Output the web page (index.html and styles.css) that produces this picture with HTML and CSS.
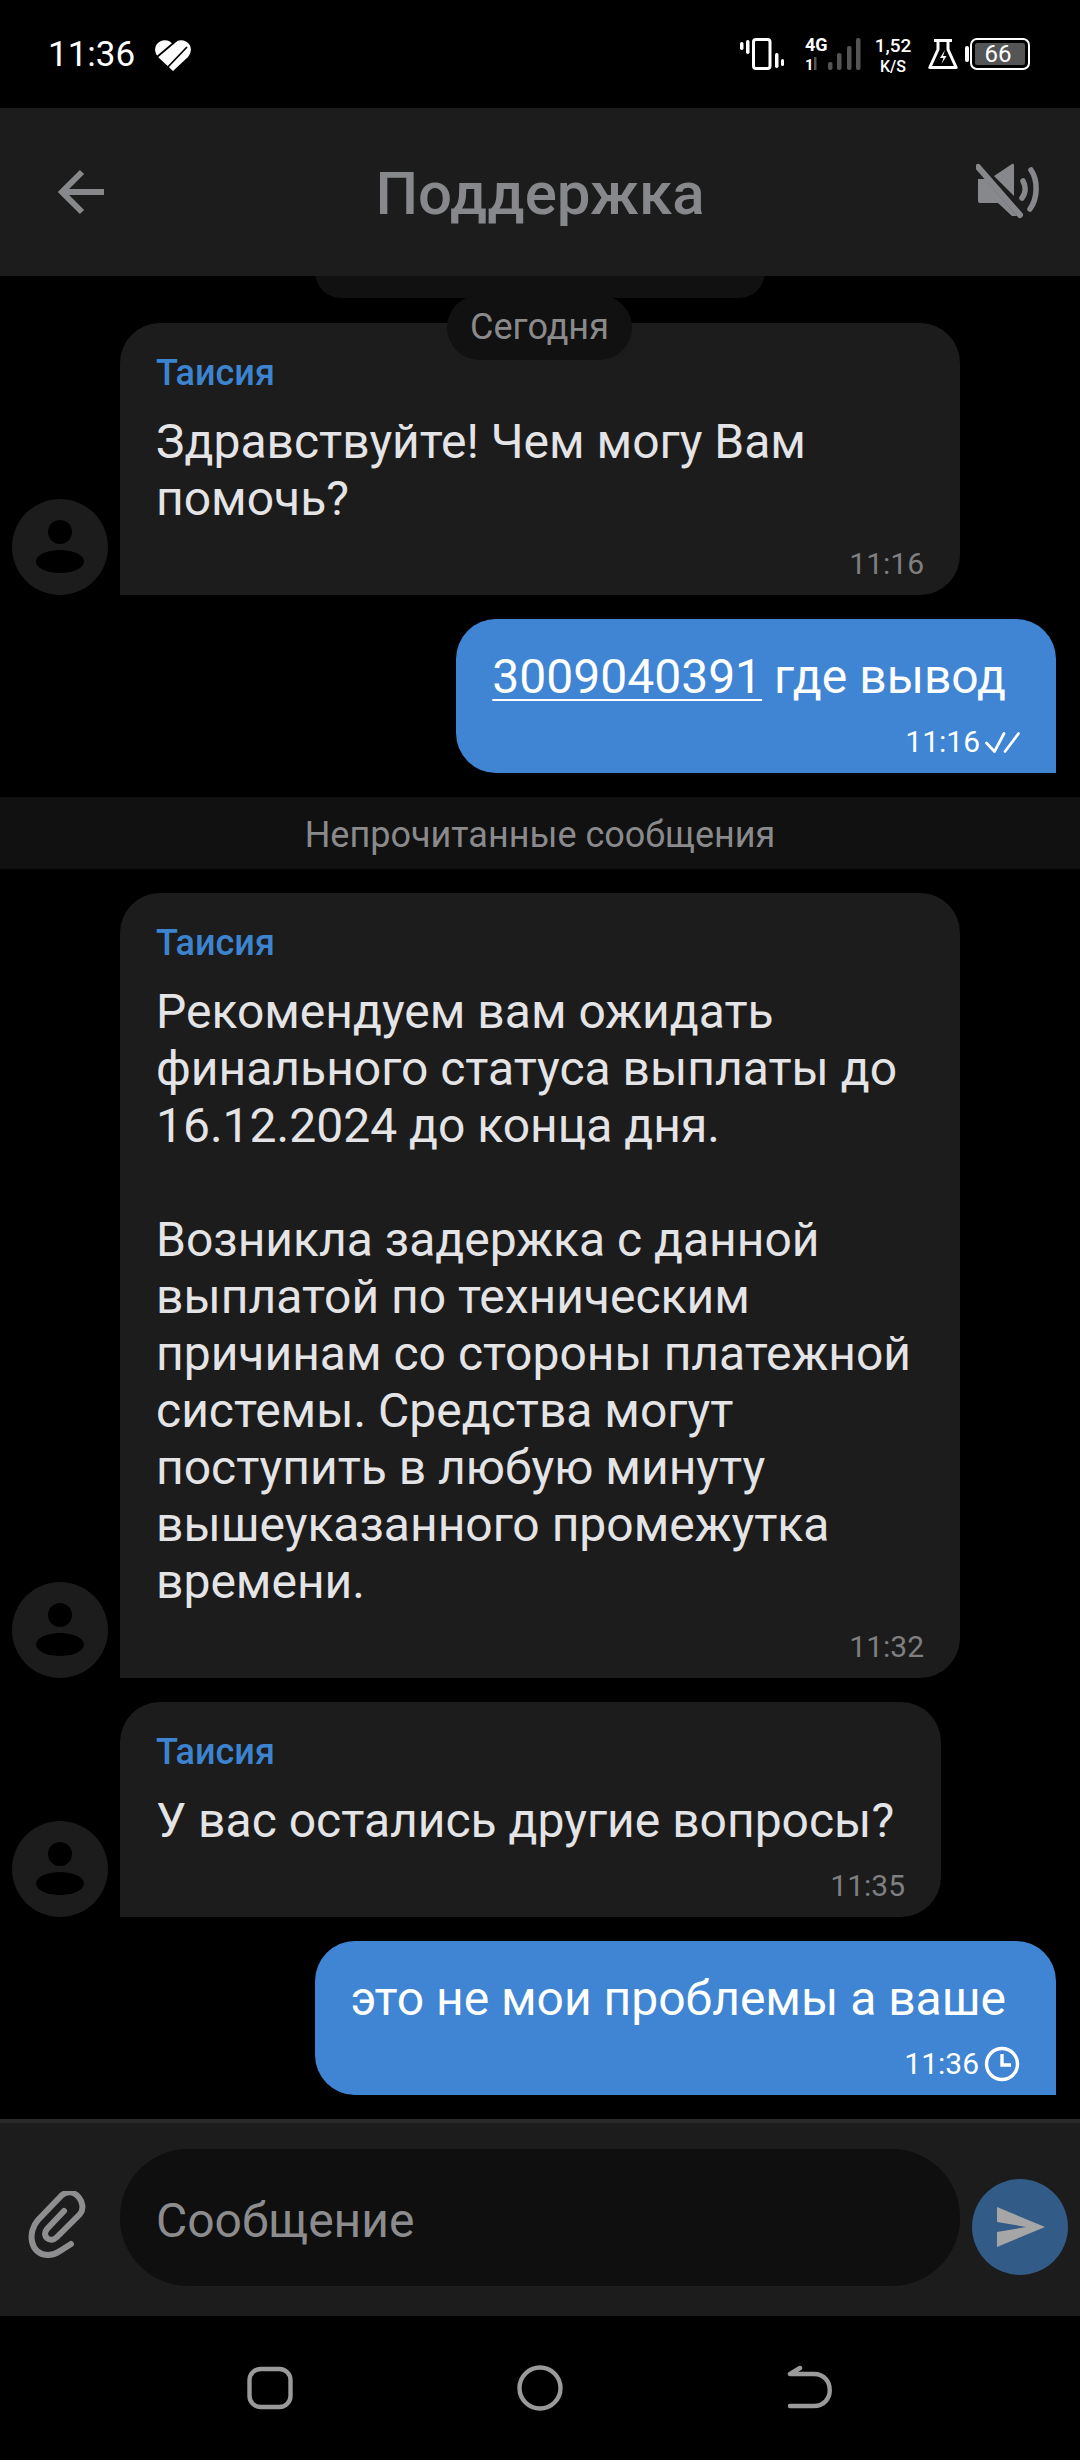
FILE: index.html
```html
<!DOCTYPE html>
<html lang="ru">
<head>
<meta charset="utf-8">
<title>Поддержка</title>
<link rel="stylesheet" href="styles.css">
</head>
<body>
<div class="screen">
  <div class="statusbar">
    <div class="status-left">
      <span class="clock">11:36</span>
      <svg class="heart" viewBox="0 0 36 31"><path fill="#fff" d="M18 31 3 17C-2 11 0 4 5 1.500c5-2.500 10-1 13 3 3-4 8-5.500 13-3 5 2.500 7 9.500 2 15.500z"/><path d="M2 17 22 0M11 29 32 7" stroke="#000" stroke-width="1.800" fill="none"/></svg>
    </div>
    <div class="status-right">
      <svg class="ic-vib" viewBox="0 0 44 32"><g fill="#fff"><rect x="0" y="4" width="3.500" height="8" rx="1.700"/><rect x="6" y="2" width="3.500" height="14" rx="1.700"/><rect x="35" y="15" width="3.500" height="15" rx="1.700"/><rect x="41" y="21" width="3" height="7" rx="1.500"/></g><rect x="13.500" y="1.500" width="16.500" height="29" rx="2.500" fill="none" stroke="#fff" stroke-width="3"/></svg>
      <div class="net">
        <div class="net-text"><span class="net-g">4G</span><span class="net-s">1</span></div>
        <svg class="ic-bars" viewBox="0 0 47 32"><g fill="#555"><rect x="0" y="19" width="2.500" height="13"/><rect x="14" y="24" width="4.500" height="8" rx="2"/><rect x="23" y="15" width="4.500" height="17" rx="2"/><rect x="33" y="8" width="4.500" height="24" rx="2"/><rect x="42" y="0" width="4.500" height="32" rx="2"/></g></svg>
      </div>
      <div class="speed"><span class="speed-v">1,52</span><span class="speed-u">K/S</span></div>
      <svg class="ic-flask" viewBox="0 0 30 30"><path d="M6 1.500h18M10 1.500v9L1.800 28.500h26.400L20 10.500v-9" fill="none" stroke="#fff" stroke-width="3" stroke-linejoin="round"/><path d="M17 11l-5 8h3.500l-2 6 5-8H15z" fill="#fff"/></svg>
      <div class="battery"><span class="cap"></span><div class="cell"><span class="fill"></span><span class="pct">66</span></div></div>
    </div>
  </div>

  <header class="appbar">
    <svg class="ic-back" viewBox="0 0 48 48"><path d="M46 24H6M24 4 4 24l20 20" fill="none" stroke="#87888b" stroke-width="6"/></svg>
    <h1 class="title">Поддержка</h1>
    <svg class="ic-mute" viewBox="0 0 64 56"><path fill="#87888b" d="M2 16h7l32 37-5 0-14-13H4a2 2 0 0 1-2-2zM18 13 36 1c1-.5 2 0 2 1.500V33z"/><path d="M2 4l42 48" stroke="#87888b" stroke-width="6" stroke-linecap="round"/><path d="M47 18c3 5 3 12-1 17M55 7c7 10 7 28-1 39" fill="none" stroke="#87888b" stroke-width="5.500" stroke-linecap="round"/></svg>
  </header>

  <main class="chat">
    <div class="ghost-pill"></div>
    <div class="date-pill">Сегодня</div>

    <div class="row">
      <svg class="avatar" viewBox="0 0 96 96"><circle cx="48" cy="48" r="48" fill="#1c1c1c"/><circle cx="48" cy="33" r="12" fill="#000"/><ellipse cx="48" cy="62.500" rx="24" ry="11.500" fill="#000"/></svg>
      <div class="bubble in wide">
        <div class="name">Таисия</div>
        <div class="text">Здравствуйте! Чем могу Вам<br>помочь?</div>
        <div class="meta">11:16</div>
      </div>
    </div>

    <div class="bubble out">
      <div class="text"><u>3009040391</u> где вывод</div>
      <div class="meta"><span>11:16</span>
        <svg class="ic-tick" viewBox="0 0 35 21"><path d="M1.500 11l8 8.500L19 1.500M20 19.500 33.500 1.500" fill="none" stroke="#fff" stroke-width="2.700" stroke-linecap="round" stroke-linejoin="round"/></svg>
      </div>
    </div>

    <div class="unread">Непрочитанные сообщения</div>

    <div class="row">
      <svg class="avatar" viewBox="0 0 96 96"><circle cx="48" cy="48" r="48" fill="#1c1c1c"/><circle cx="48" cy="33" r="12" fill="#000"/><ellipse cx="48" cy="62.500" rx="24" ry="11.500" fill="#000"/></svg>
      <div class="bubble in wide">
        <div class="name">Таисия</div>
        <div class="text">Рекомендуем вам ожидать<br>финального статуса выплаты до<br>16.12.2024 до конца дня.<br><br>Возникла задержка с данной<br>выплатой по техническим<br>причинам со стороны платежной<br>системы. Средства могут<br>поступить в любую минуту<br>вышеуказанного промежутка<br>времени.</div>
        <div class="meta">11:32</div>
      </div>
    </div>

    <div class="row">
      <svg class="avatar" viewBox="0 0 96 96"><circle cx="48" cy="48" r="48" fill="#1c1c1c"/><circle cx="48" cy="33" r="12" fill="#000"/><ellipse cx="48" cy="62.500" rx="24" ry="11.500" fill="#000"/></svg>
      <div class="bubble in">
        <div class="name">Таисия</div>
        <div class="text">У вас остались другие вопросы?</div>
        <div class="meta">11:35</div>
      </div>
    </div>

    <div class="bubble out">
      <div class="text">это не мои проблемы а ваше</div>
      <div class="meta"><span>11:36</span>
        <svg class="ic-clock" viewBox="0 0 36 36"><circle cx="18" cy="18" r="15.500" fill="none" stroke="#fff" stroke-width="3.400"/><path d="M18 8v11h9" fill="none" stroke="#fff" stroke-width="3.400"/></svg>
      </div>
    </div>
  </main>

  <footer class="composer">
    <svg class="ic-clip" viewBox="13 11 60 67"><path d="M49 31 32 49C26 56 35 64 42 57L65 34C73 24 60 6 47 15L23 40C12 52 15 75 33 75C38 75 42 73 45 71L56 64" fill="none" stroke="#8e8e90" stroke-width="6" stroke-linecap="round"/></svg>
    <div class="field">Сообщение</div>
    <div class="send"><svg viewBox="0 0 48 40"><path fill="#a6a6a6" d="M0 0l48 20L0 40V25l29-5L0 15z"/></svg></div>
  </footer>

  <nav class="navbar">
    <svg class="nav-ic" viewBox="0 0 46 46"><rect x="2.500" y="4" width="41" height="38" rx="11" fill="none" stroke="#9a9a9a" stroke-width="4.400"/></svg>
    <svg class="nav-ic" viewBox="0 0 46 46"><circle cx="23" cy="23" r="20.500" fill="none" stroke="#9a9a9a" stroke-width="4.400"/></svg>
    <svg class="nav-ic" viewBox="0 0 46 46"><path d="M13 3 3 9H27C48 9 48 41 27 41H3" fill="none" stroke="#9a9a9a" stroke-width="4.400" stroke-linecap="round" stroke-linejoin="round"/></svg>
  </nav>
</div>
</body>
</html>
```
FILE: styles.css
```css
* { box-sizing: border-box; }
html, body { margin: 0; padding: 0; background: #000; }
body { font-family: Roboto, "Noto Sans", sans-serif; }
.screen { width: 1080px; height: 2460px; display: flex; flex-direction: column; background: #000; overflow: hidden; }

.statusbar { height: 108px; padding: 0 50px 0 48px; display: flex; align-items: center; justify-content: space-between; color: #fff; }
.status-left { display: flex; align-items: center; gap: 20px; margin-top: 2px; }
.clock { font-size: 35px; line-height: 40px; }
.heart { width: 36px; height: 31px; }
.status-right { display: flex; align-items: center; height: 32px; }
.ic-vib { width: 44px; height: 32px; margin-right: 21px; }
.net { display: flex; align-items: center; margin-right: 14px; }
.net-text { display: flex; flex-direction: column; font-weight: 700; width: 9px; white-space: nowrap; }
.net-g { font-size: 18px; line-height: 22px; }
.net-s { font-size: 15px; line-height: 18px; }
.ic-bars { width: 47px; height: 32px; }
.speed { display: flex; flex-direction: column; align-items: center; font-weight: 500; width: 36px; margin-right: 17px; margin-top: 3px; }
.speed-v { font-size: 19px; line-height: 22px; }
.speed-u { font-size: 16px; line-height: 19px; }
.ic-flask { width: 30px; height: 30px; margin-right: 7px; }
.battery { display: flex; align-items: center; }
.cap { width: 4px; height: 16px; background: #fff; border-radius: 2px; margin-right: 1px; }
.cell { position: relative; width: 60px; height: 32px; border: 2.500px solid #fff; border-radius: 7px; display: flex; align-items: center; justify-content: center; }
.fill { position: absolute; inset: 3px; background: #555; border-radius: 2px; }
.pct { position: relative; font-size: 24px; line-height: 26px; margin-right: 4px; }

.appbar { height: 168px; flex: none; background: #1c1c1c; display: grid; grid-template-columns: 1fr auto 1fr; align-items: center; padding: 0 40px; position: relative; z-index: 2; }
.ic-back { width: 48px; height: 48px; margin-left: 18px; }
.title { margin: 4px 0 0; font-size: 60px; font-weight: 500; color: #87888b; line-height: 68px; }
.ic-mute { width: 64px; height: 56px; margin-top: -2px; justify-self: end; }

.chat { position: relative; flex: 1; padding: 47px 24px 24px 12px; display: flex; flex-direction: column; gap: 24px; }
.ghost-pill { position: absolute; left: 315px; top: -20px; width: 450px; height: 42px; background: #111; border-radius: 0 0 26px 26px; }
.date-pill { position: absolute; z-index: 1; left: 447px; top: 19px; width: 185px; height: 65px; border-radius: 33px; background: #111; color: #8a8a8c; font-size: 36px; line-height: 65px; text-align: center; }

.row { display: flex; align-items: flex-end; gap: 12px; }
.avatar { width: 96px; height: 96px; flex: none; }
.bubble { padding: 29px 36px 11px; border-radius: 40px; }
.in { background: #1c1c1c; border-bottom-left-radius: 0; color: #e4e4e6; padding-top: 28px; }
.wide { width: 840px; }
.out { background: #3f85d3; border-bottom-right-radius: 0; align-self: flex-end; color: #fff; }
.name { font-size: 36px; font-weight: 500; line-height: 44px; color: #3d84d0; margin-bottom: 18px; }
.text { font-size: 48px; line-height: 57px; white-space: nowrap; padding-right: 11px; }
.out .text { padding-right: 14px; }
.text u { text-decoration-thickness: 2px; text-underline-offset: 6px; }
.meta { margin-top: 17px; height: 40px; font-size: 30px; line-height: 40px; display: flex; justify-content: flex-end; align-items: center; gap: 5px; color: #7f7f81; }
.out .meta { color: #fff; }
.ic-tick { width: 35px; height: 21px; }
.ic-clock { width: 36px; height: 36px; }

.unread { height: 72px; margin-left: -12px; margin-right: -24px; background: #111; color: #8a8a8c; font-size: 36px; line-height: 76px; text-align: center; }

.composer { height: 197px; flex: none; background: #1c1c1c; border-top: 4px solid #2a2a2a; display: flex; align-items: center; padding: 0 12px 0 28px; }
.ic-clip { width: 60px; height: 67px; flex: none; margin-right: 32px; margin-top: 10px; }
.field { width: 840px; height: 137px; margin-top: -4px; border-radius: 68px; background: #0f0f0f; color: #8c8c8e; font-size: 48px; line-height: 143px; padding-left: 36px; }
.send { width: 96px; height: 96px; border-radius: 50%; background: #325c87; margin-left: 12px; margin-top: 14px; display: flex; align-items: center; justify-content: center; padding-left: 2px; }
.send svg { width: 48px; height: 40px; }

.navbar { height: 144px; flex: none; display: flex; justify-content: center; align-items: center; gap: 224px; }
.nav-ic { width: 46px; height: 46px; }
```
